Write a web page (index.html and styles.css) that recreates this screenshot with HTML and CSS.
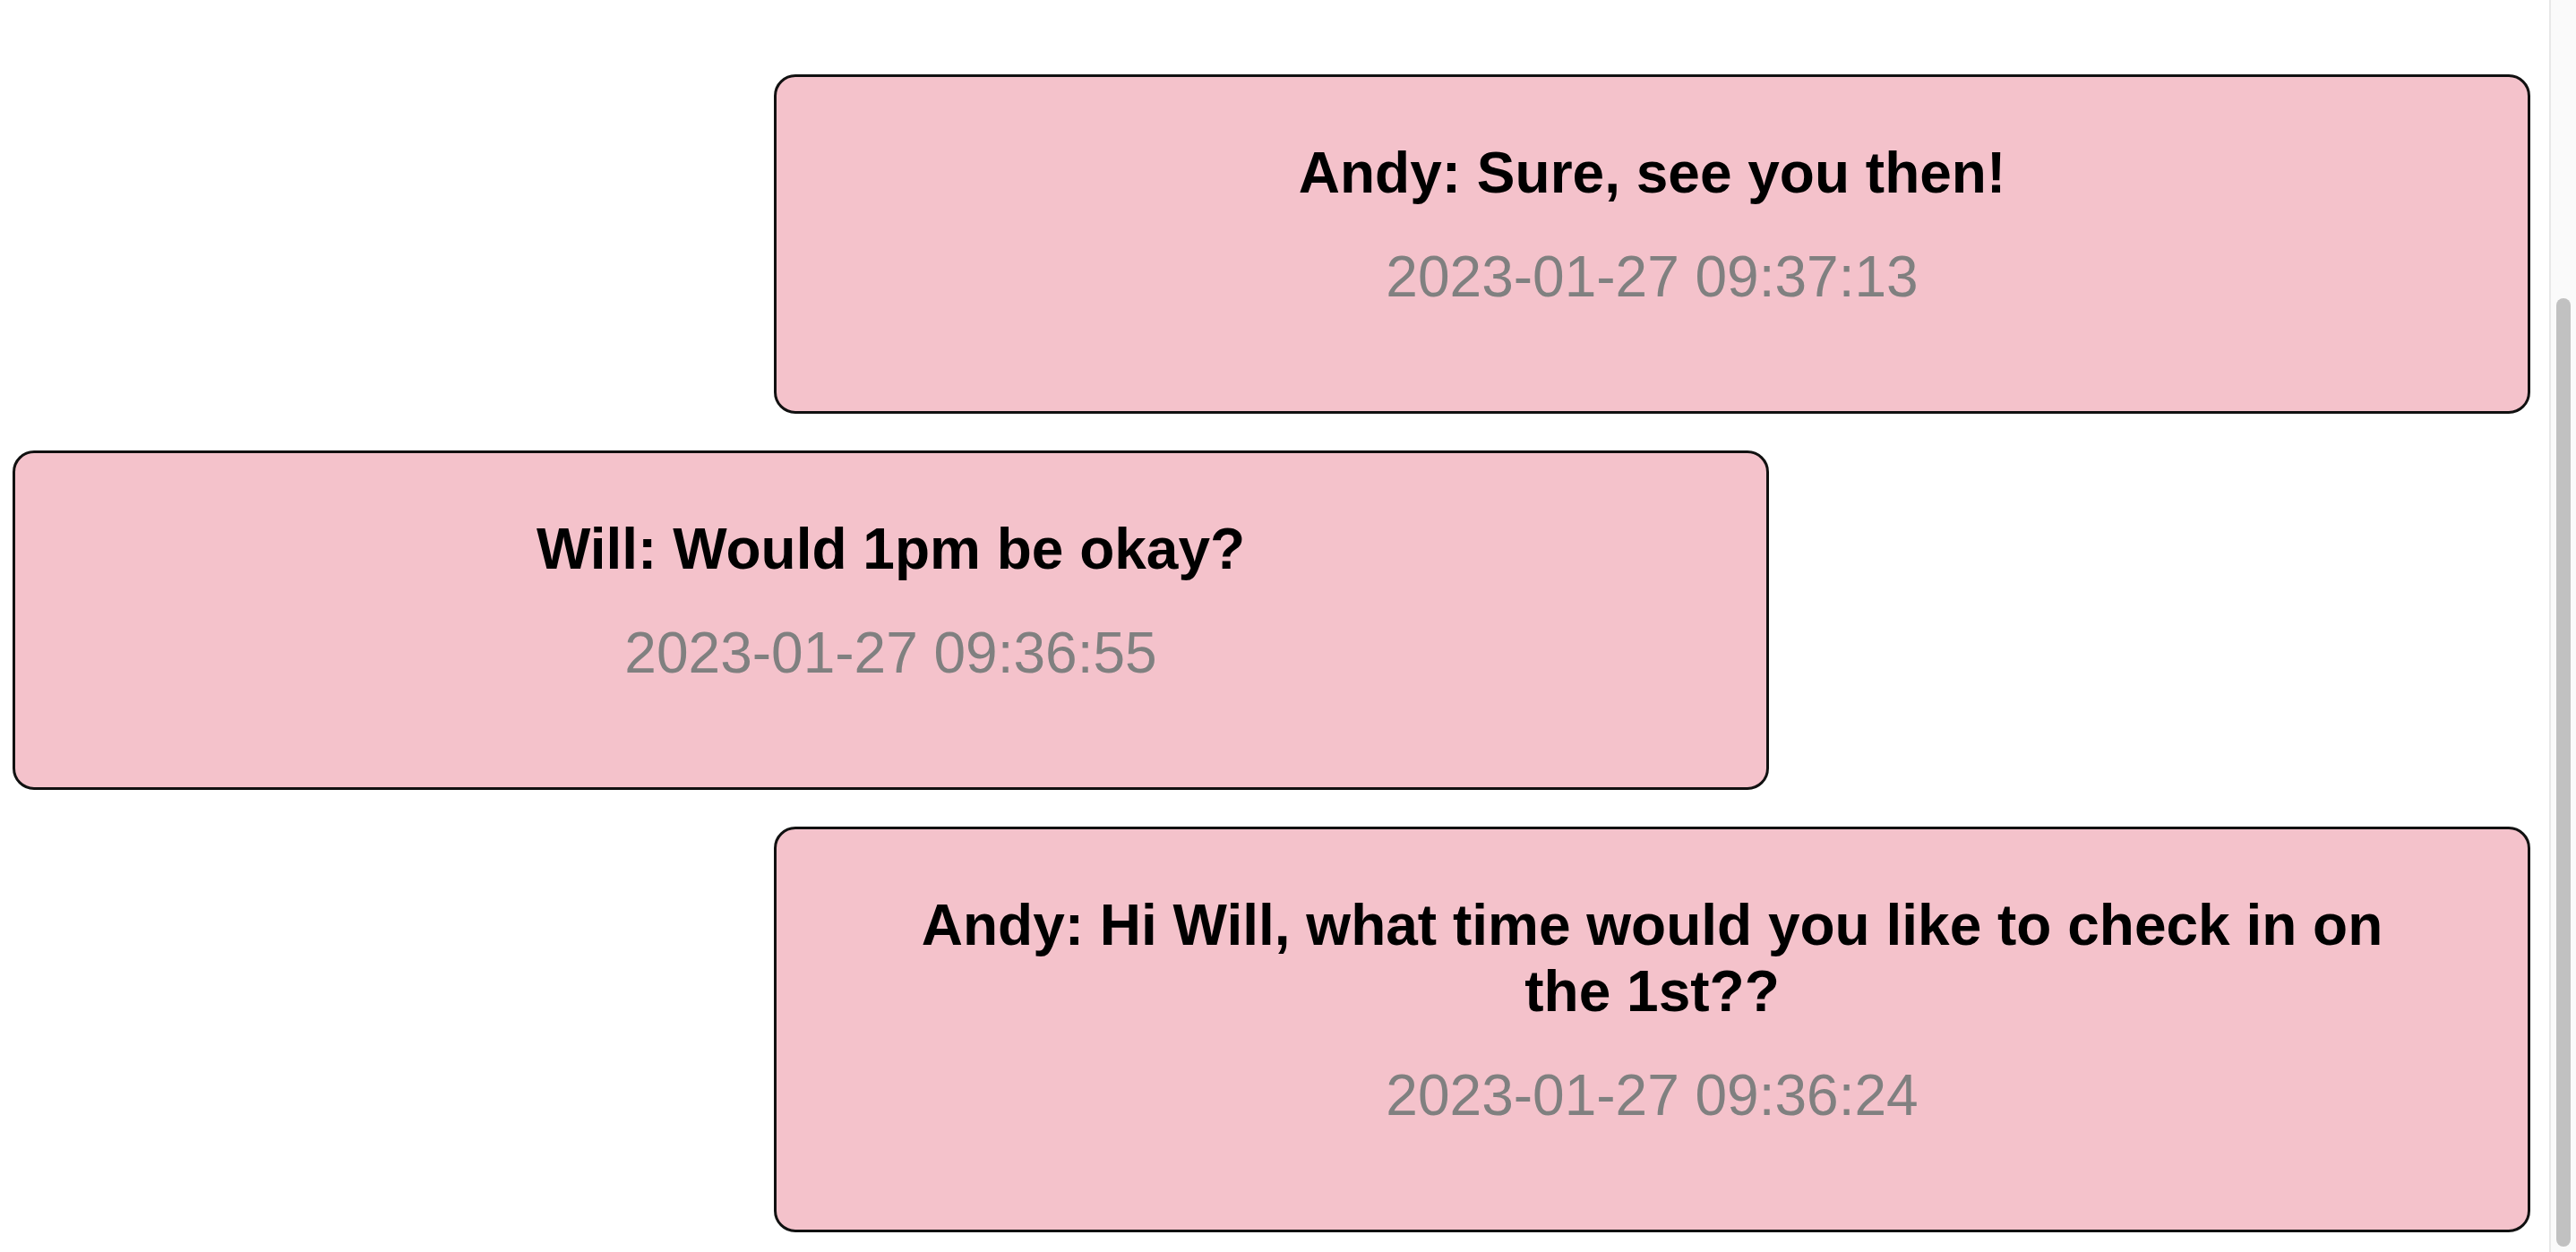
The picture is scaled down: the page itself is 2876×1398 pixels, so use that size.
FILE: index.html
```html
<!DOCTYPE html>
<html lang="en">
<head>
<meta charset="utf-8">
<title>Messages</title>
<link rel="stylesheet" href="styles.css">
</head>
<body>
<div class="window">
  <main class="chat">
    <div class="msg msg--right">
      <p class="msg-text">Andy: Sure, see you then!</p>
      <p class="msg-time">2023-01-27 09:37:13</p>
    </div>
    <div class="msg msg--left">
      <p class="msg-text">Will: Would 1pm be okay?</p>
      <p class="msg-time">2023-01-27 09:36:55</p>
    </div>
    <div class="msg msg--right">
      <p class="msg-text">Andy: Hi Will, what time would you like to check in on the 1st??</p>
      <p class="msg-time">2023-01-27 09:36:24</p>
    </div>
  </main>
  <div class="scrollbar" aria-hidden="true">
    <div class="scrollbar-thumb"></div>
  </div>
</div>
</body>
</html>
```

FILE: styles.css
```css
* {
  box-sizing: border-box;
}

html, body {
  margin: 0;
  padding: 0;
  background: #ffffff;
}

body {
  font-family: "Liberation Sans", Arial, sans-serif;
}

.window {
  display: flex;
  height: 100vh;
  overflow: hidden;
}

.chat {
  flex: 1;
  min-width: 0;
  display: flex;
  flex-direction: column;
  justify-content: flex-end;
  gap: 41px;
  padding-bottom: 22px;
  overflow: hidden;
}

.msg {
  flex-shrink: 0;
  width: 1961px;
  background: #f4c2cb;
  border: 3px solid #111111;
  border-radius: 24px;
  padding: 70px 130px 113px;
  text-align: center;
}

.msg--right {
  align-self: flex-end;
  margin-right: 21px;
}

.msg--left {
  align-self: flex-start;
  margin-left: 14px;
}

.msg-text {
  margin: 0;
  font-size: 64px;
  line-height: 74px;
  font-weight: bold;
  color: #000000;
}

.msg-time {
  margin: 42px 0 0;
  font-size: 64px;
  line-height: 74px;
  color: #808080;
}

.scrollbar {
  width: 30px;
  flex-shrink: 0;
  background: #fafafa;
  border-left: 2px solid #e8e8e8;
  display: flex;
  flex-direction: column;
  justify-content: flex-end;
  padding: 0 6px 6px 6px;
}

.scrollbar-thumb {
  height: 1059px;
  width: 16px;
  background: #c1c1c1;
  border-radius: 8px;
}
```
